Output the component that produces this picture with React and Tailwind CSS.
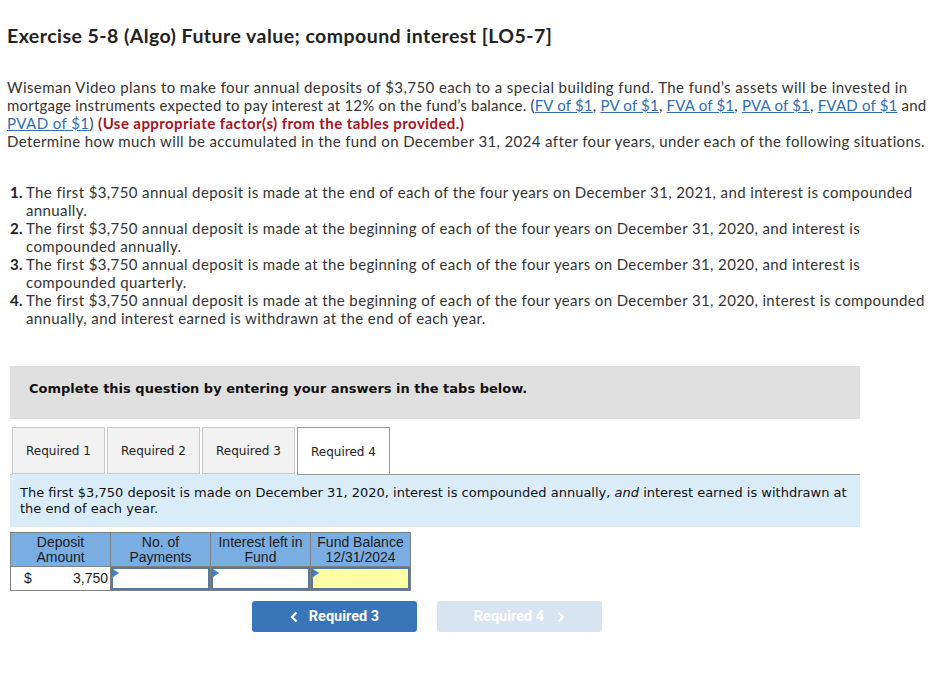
import React from "react";

const main = { fontFamily: "Lato, 'Noto Sans', sans-serif" };
const verd = { fontFamily: "'DejaVu Sans', Verdana, sans-serif" };
const arial = { fontFamily: "'Liberation Sans', Arial, sans-serif" };

function L({ children }) {
  return <a className="text-[#2f6db5] underline decoration-[#2f6db5]">{children}</a>;
}

function Item({ n, children }) {
  return (
    <div className="flex">
      <span className="w-[16px] shrink-0 text-right font-bold text-[#222]">{n}.</span>
      <span className="pl-[3px]">{children}</span>
    </div>
  );
}

function Tab({ children, active }) {
  return (
    <div
      className={
        "flex h-[47px] items-center justify-center pt-px text-[12px] text-[#222] " +
        (active
          ? "w-[93px] border border-b-0 border-[#999] bg-white"
          : "w-[93px] border border-[#c8c8c8] bg-[#f2f2f2]")
      }
      style={verd}
    >
      {children}
    </div>
  );
}

function InputCell({ yellow }) {
  return (
    <td className="h-[23px] border border-[#808080] p-0">
      <div className={"relative h-[23px] border-2 border-[#56789e] " + (yellow ? "bg-[#ffffa8]" : "bg-white")}>
        <div className="absolute left-0 top-0 h-0 w-0 border-b-[4px] border-l-[6px] border-t-[4px] border-b-transparent border-l-[#3a7fd0] border-t-transparent" />
      </div>
    </td>
  );
}

export default function App() {
  return (
    <div className="min-h-[693px] w-[950px] bg-white text-[#333]" style={main}>
      <div className="px-[7px]">
        <h1 className="pt-[25px] text-[19.5px] font-bold leading-[22px] tracking-[0.45px] text-[#222]">
          Exercise 5-8 (Algo) Future value; compound interest [LO5-7]
        </h1>
        <div className="mt-[31px] whitespace-nowrap text-[15px] leading-[18px] tracking-[0.42px]">
          <div>
            Wiseman Video plans to make four annual deposits of $3,750 each to a special building fund. The fund’s assets will be invested in
          </div>
          <div className="tracking-[0.2px]">
            mortgage instruments expected to pay interest at 12% on the fund’s balance. (<L>FV of $1</L>, <L>PV of $1</L>, <L>FVA of $1</L>, <L>PVA of $1</L>, <L>FVAD of $1</L> and
          </div>
          <div>
            <L>PVAD of $1</L>) <span className="font-bold text-[#a8121e]">(Use appropriate factor(s) from the tables provided.)</span>
          </div>
          <div className="tracking-[0.38px]">
            Determine how much will be accumulated in the fund on December 31, 2024 after four years, under each of the following situations.
          </div>
        </div>
        <div className="mt-[33px] whitespace-nowrap text-[15px] leading-[18px] tracking-[0.38px]">
          <Item n="1">
            The first $3,750 annual deposit is made at the end of each of the four years on December 31, 2021, and interest is compounded
            <br />
            annually.
          </Item>
          <Item n="2">
            The first $3,750 annual deposit is made at the beginning of each of the four years on December 31, 2020, and interest is
            <br />
            compounded annually.
          </Item>
          <Item n="3">
            The first $3,750 annual deposit is made at the beginning of each of the four years on December 31, 2020, and interest is
            <br />
            compounded quarterly.
          </Item>
          <Item n="4">
            The first $3,750 annual deposit is made at the beginning of each of the four years on December 31, 2020, interest is compounded
            <br />
            annually, and interest earned is withdrawn at the end of each year.
          </Item>
        </div>
      </div>

      <div className="ml-[10px] mt-[39px] h-[53px] w-[850px] bg-[#e0e0e0] pl-[19px] pt-[14px]">
        <div className="text-[13px] font-bold leading-[18px] text-[#111]" style={verd}>
          Complete this question by entering your answers in the tabs below.
        </div>
      </div>

      <div className="ml-[12px] mt-[8px] flex gap-[2px]">
        <Tab>Required 1</Tab>
        <Tab>Required 2</Tab>
        <Tab>Required 3</Tab>
        <Tab active>Required 4</Tab>
      </div>

      <div className="relative ml-[10px] w-[850px]">
        <div className="absolute left-[287px] right-0 top-0 h-px bg-[#999]" />
        <div className="absolute left-[0px] top-0 h-px w-[2px] bg-[#c8c8c8]" />
        <div
          className="h-[53px] bg-[#dbecf9] pl-[10px] pt-[11px] text-[13px] leading-[16px] text-[#111]"
          style={verd}
        >
          <div className="whitespace-nowrap">
            The first $3,750 deposit is made on December 31, 2020, interest is compounded annually, <i>and</i> interest earned is withdrawn at
          </div>
          <div>the end of each year.</div>
        </div>
      </div>

      <table
        className="ml-[10px] mt-[5px] w-[400px] table-fixed border-collapse text-[14px] text-[#1a1a1a]"
        style={arial}
      >
        <thead>
          <tr className="bg-[#7aaee3]">
            <th className="h-[34px] w-[100px] border border-[#808080] px-0 text-center font-normal leading-[15px]">
              Deposit
              <br />
              Amount
            </th>
            <th className="w-[100px] border border-[#808080] px-0 text-center font-normal leading-[15px]">
              No. of
              <br />
              Payments
            </th>
            <th className="w-[100px] border border-[#808080] px-0 text-center font-normal leading-[15px]">
              Interest left in
              <br />
              Fund
            </th>
            <th className="w-[100px] border border-[#808080] px-0 text-center font-normal leading-[15px]">
              Fund Balance
              <br />
              12/31/2024
            </th>
          </tr>
        </thead>
        <tbody>
          <tr>
            <td className="h-[23px] border border-[#808080] p-0">
              <div className="flex items-center justify-between pl-[13px] pr-[2px] leading-[21px]">
                <span>$</span>
                <span>3,750</span>
              </div>
            </td>
            <InputCell />
            <InputCell />
            <InputCell yellow />
          </tr>
        </tbody>
      </table>

      <div className="ml-[252px] mt-[10px] flex gap-[20px]" style={{ fontFamily: "Roboto, Arial, sans-serif" }}>
        <div className="flex h-[31px] w-[165px] items-center justify-center gap-[11px] rounded-[3px] bg-[#3875b9] text-[14.5px] font-bold text-white">
          <svg width="8" height="12" viewBox="0 0 8 12">
            <path d="M6.5 1.5 L2 6 L6.5 10.5" stroke="white" strokeWidth="2.2" fill="none" />
          </svg>
          <span>Required 3</span>
        </div>
        <div className="flex h-[31px] w-[165px] items-center justify-center gap-[13px] rounded-[3px] bg-[#d8e4f2] text-[14.5px] font-bold text-white">
          <span>Required 4</span>
          <svg width="8" height="12" viewBox="0 0 8 12">
            <path d="M1.5 1.5 L6 6 L1.5 10.5" stroke="white" strokeWidth="2.2" fill="none" />
          </svg>
        </div>
      </div>
    </div>
  );
}
